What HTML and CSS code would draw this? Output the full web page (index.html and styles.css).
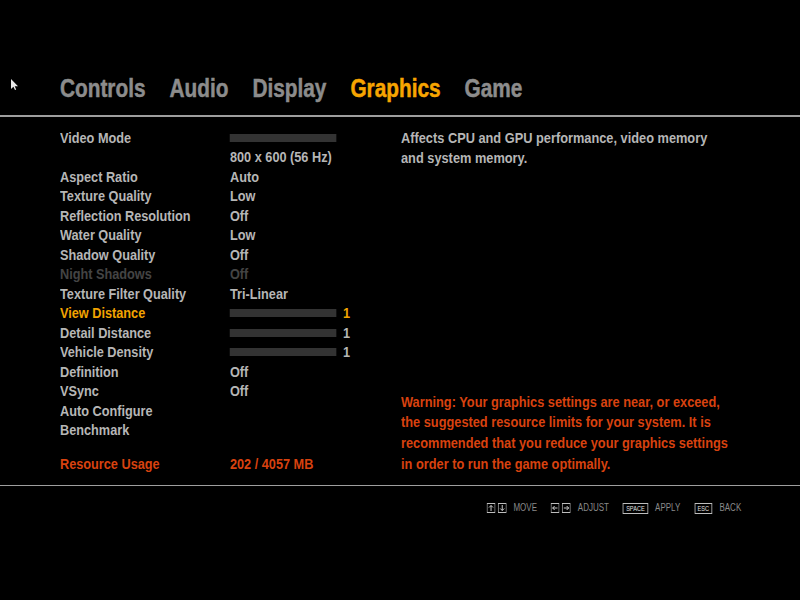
FILE: index.html
```html
<!DOCTYPE html>
<html>
<head>
<meta charset="utf-8">
<link rel="stylesheet" href="styles.css">
</head>
<body>
<div class="screen">
  <svg class="cursor" width="8" height="12" viewBox="0 0 8 12"><path d="M0 0V10L2.4 7.8L4 11L5.2 10.4L3.7 7.3H7Z" fill="#e8e8e8"/></svg>
  <nav class="tabs">
    <div class="tab-list">
      <span class="tab">Controls</span>
      <span class="tab">Audio</span>
      <span class="tab">Display</span>
      <span class="tab current">Graphics</span>
      <span class="tab">Game</span>
    </div>
  </nav>
  <div class="content">
    <div class="settings">
      <div class="row"><span class="label">Video Mode</span><span class="value"><span class="bar"></span></span></div>
      <div class="row"><span class="label"></span><span class="value">800 x 600 (56 Hz)</span></div>
      <div class="row"><span class="label">Aspect Ratio</span><span class="value">Auto</span></div>
      <div class="row"><span class="label">Texture Quality</span><span class="value">Low</span></div>
      <div class="row"><span class="label">Reflection Resolution</span><span class="value">Off</span></div>
      <div class="row"><span class="label">Water Quality</span><span class="value">Low</span></div>
      <div class="row"><span class="label">Shadow Quality</span><span class="value">Off</span></div>
      <div class="row disabled"><span class="label">Night Shadows</span><span class="value">Off</span></div>
      <div class="row"><span class="label">Texture Filter Quality</span><span class="value">Tri-Linear</span></div>
      <div class="row active"><span class="label">View Distance</span><span class="value"><span class="bar"></span><span class="num">1</span></span></div>
      <div class="row"><span class="label">Detail Distance</span><span class="value"><span class="bar"></span><span class="num">1</span></span></div>
      <div class="row"><span class="label">Vehicle Density</span><span class="value"><span class="bar"></span><span class="num">1</span></span></div>
      <div class="row"><span class="label">Definition</span><span class="value">Off</span></div>
      <div class="row"><span class="label">VSync</span><span class="value">Off</span></div>
      <div class="row"><span class="label">Auto Configure</span></div>
      <div class="row"><span class="label">Benchmark</span></div>
      <div class="row usage"><span class="label">Resource Usage</span><span class="value">202 / 4057 MB</span></div>
    </div>
    <div class="info">
      <p class="desc">Affects CPU and GPU performance, video memory<br>and system memory.</p>
      <p class="warning">Warning: Your graphics settings are near, or exceed,<br>the suggested resource limits for your system. It is<br>recommended that you reduce your graphics settings<br>in order to run the game optimally.</p>
    </div>
  </div>
  <footer class="hints">
    <div class="hint-list">
      <div class="hint">
        <span class="keys">
          <svg class="arrowkey" width="11" height="10" viewBox="0 0 11 10"><rect x="0.5" y="0.5" width="10" height="9" fill="none" stroke="#bdbdbd"/><path d="M5.5 8V2.5M3 4.5L5.5 2.5L8 4.5" stroke="#e0e0e0" fill="none"/></svg>
          <svg class="arrowkey" width="11" height="10" viewBox="0 0 11 10"><rect x="0.5" y="0.5" width="10" height="9" fill="none" stroke="#bdbdbd"/><path d="M5.5 2V7.5M3 5.5L5.5 7.5L8 5.5" stroke="#e0e0e0" fill="none"/></svg>
        </span>
        <span class="hint-label">MOVE</span>
      </div>
      <div class="hint">
        <span class="keys">
          <svg class="arrowkey" width="11" height="10" viewBox="0 0 11 10"><rect x="0.5" y="0.5" width="10" height="9" fill="none" stroke="#bdbdbd"/><path d="M8.5 5H2.5M5 3L2.5 5L5 7" stroke="#e0e0e0" fill="none"/></svg>
          <svg class="arrowkey" width="11" height="10" viewBox="0 0 11 10"><rect x="0.5" y="0.5" width="10" height="9" fill="none" stroke="#bdbdbd"/><path d="M2.5 5H8.5M6 3L8.5 5L6 7" stroke="#e0e0e0" fill="none"/></svg>
        </span>
        <span class="hint-label">ADJUST</span>
      </div>
      <div class="hint">
        <span class="keys"><span class="textkey">SPACE</span></span>
        <span class="hint-label">APPLY</span>
      </div>
      <div class="hint">
        <span class="keys"><span class="textkey">ESC</span></span>
        <span class="hint-label">BACK</span>
      </div>
    </div>
  </footer>
</div>
</body>
</html>
```
FILE: styles.css
```css
html, body {
  margin: 0;
  background: #000;
}

.screen {
  position: relative;
  width: 800px;
  height: 600px;
  background: #000;
  font-family: "Liberation Sans", Arial, sans-serif;
  font-weight: bold;
  color: #b6b6b6;
  overflow: hidden;
}

.cursor {
  position: absolute;
  left: 11px;
  top: 79px;
}

/* ---- tabs ---- */
.tabs {
  padding: 72px 0 11px 60px;
  border-bottom: 2px solid #9e9e9e;
}

.tab-list {
  display: flex;
  gap: 30px;
  font-size: 26px;
  line-height: 32px;
  color: #8c8c8c;
  -webkit-text-stroke: 0.5px currentColor;
  transform: scaleX(0.8);
  transform-origin: left center;
  white-space: nowrap;
}

.tab.current {
  color: #f7a500;
}

/* ---- content ---- */
.content {
  display: flex;
  padding: 10.5px 0 11.5px 60px;
  border-bottom: 1px solid #9e9e9e;
  font-size: 15.5px;
}

.settings {
  width: 341px;
  flex: none;
  transform: scaleX(0.82);
  transform-origin: left top;
}

.row {
  display: flex;
  align-items: center;
  height: 19.5px;
  line-height: 19.5px;
  white-space: nowrap;
}

.label {
  width: 207.3px;
  flex: none;
}

.value {
  display: flex;
  align-items: center;
  gap: 8.5px;
}

.bar {
  display: block;
  width: 129.3px;
  height: 8px;
  margin-top: 1px;
  background: #333333;
}

.row.disabled {
  color: #444444;
}

.row.active {
  color: #f2a300;
}

.row.usage {
  margin-top: 14.5px;
  color: #d8420f;
}

.info {
  display: flex;
  flex-direction: column;
  justify-content: space-between;
  line-height: 20.7px;
  white-space: nowrap;
  transform: scaleX(0.825);
  transform-origin: left top;
}

.info p {
  margin: 0;
}

.warning {
  color: #d8420f;
  position: relative;
  top: 1px;
}

/* ---- footer hints ---- */
.hints {
  display: flex;
  justify-content: flex-end;
  padding: 16px 59px 0 0;
}

.hint-list {
  display: flex;
  align-items: center;
  gap: 17.5px;
  font-size: 10px;
  line-height: 12px;
  font-weight: normal;
  color: #8a8a8a;
  white-space: nowrap;
  transform: scaleX(0.8);
  transform-origin: right center;
}

.hint {
  display: flex;
  align-items: center;
  gap: 9px;
}

.keys {
  display: flex;
  gap: 2.5px;
}

.arrowkey {
  display: block;
}

.textkey {
  display: block;
  border: 1px solid #bdbdbd;
  padding: 0 3px;
  height: 9px;
  line-height: 9px;
  font-size: 7px;
  color: #e0e0e0;
}
```
